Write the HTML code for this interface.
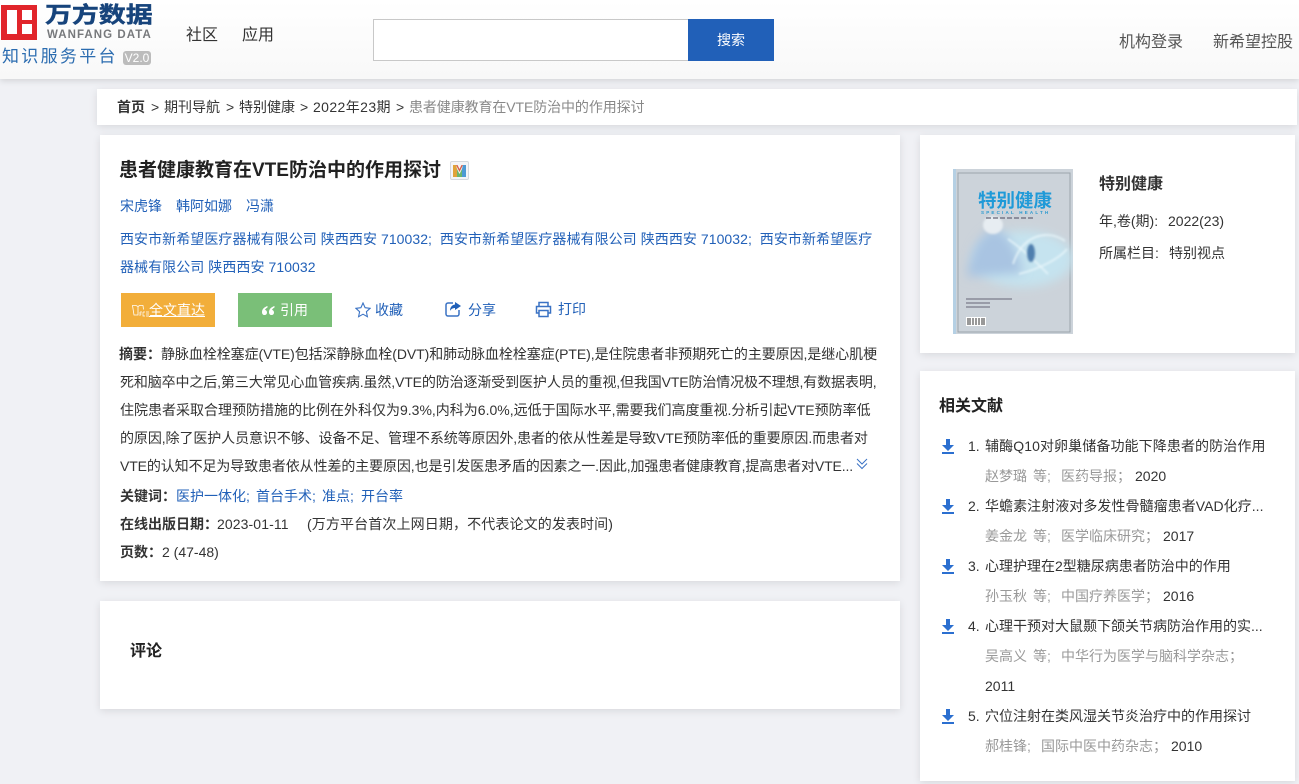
<!DOCTYPE html>
<html lang="zh-CN"><head><meta charset="utf-8"><title>患者健康教育在VTE防治中的作用探讨</title>
<style>
*{box-sizing:border-box;margin:0;padding:0}
html,body{width:1299px;height:784px;overflow:hidden;background:#f0f1f5}
body{position:relative;font-family:"Liberation Sans","Noto Sans CJK SC",sans-serif;font-size:14px;color:#333}
.a{position:absolute;white-space:nowrap;line-height:20px}
.card{position:absolute;background:#fff;box-shadow:0 2px 8px rgba(0,0,0,.1)}
.b{color:#2160b8}
.g{color:#999}
.d{color:#333}
svg{position:absolute;display:block}
</style></head><body>
<div class="a" style="left:0;top:0;width:1299px;height:79px;background:linear-gradient(#fff,#f8f8f8);box-shadow:0 2px 6px rgba(0,0,0,.12)"></div>
<svg style="left:1px;top:5px" width="36" height="35" viewBox="0 0 36 35"><rect width="36" height="35" fill="#e1252b"/><rect x="6" y="5" width="10" height="24" fill="#fff"/><rect x="21" y="5" width="10" height="10" fill="#fff"/><rect x="21" y="19" width="10" height="10" fill="#fff"/></svg>
<div class="a" style="left:45px;top:2px;font-size:27px;line-height:32px;font-weight:700;color:#17447c;letter-spacing:-.1px;-webkit-text-stroke:.5px #17447c;transform:scale(1,.82);transform-origin:0 0">万方数据</div>
<div class="a" style="left:47px;top:29px;font-size:11.500px;line-height:12px;font-weight:700;color:#77797c;letter-spacing:1.050px">WANFANG DATA</div>
<div class="a" style="left:2px;top:46px;font-size:17px;line-height:22px;color:#2b6cb0;letter-spacing:2.300px">知识服务平台</div>
<div class="a" style="left:123px;top:51px;width:28px;height:14px;border-radius:3px;background:#bcbcbc;color:#fff;font-size:12px;line-height:14px;text-align:center">V2.0</div>
<div class="a" style="left:186px;top:26px;font-size:16px">社区</div>
<div class="a" style="left:242px;top:26px;font-size:16px">应用</div>
<div class="a" style="left:373px;top:19px;width:316px;height:42px;background:#fff;border:1px solid #c8c8c8"></div>
<div class="a" style="left:688px;top:19px;width:86px;height:42px;background:#2160b8;color:#fff;text-align:center;line-height:42px;font-size:14px">搜索</div>
<div class="a" style="left:1119px;top:33px;color:#555;font-size:16px">机构登录</div>
<div class="a" style="left:1213px;top:33px;color:#555;font-size:16px">新希望控股</div>

<div class="card" style="left:97px;top:89px;width:1200px;height:36px"></div>
<div class="a" style="left:117px;top:97px"><b>首页</b></div>
<div class="a" style="left:151px;top:97px">&gt;</div>
<div class="a" style="left:164px;top:97px">期刊导航</div>
<div class="a" style="left:226px;top:97px">&gt;</div>
<div class="a" style="left:239px;top:97px">特别健康</div>
<div class="a" style="left:300px;top:97px">&gt;</div>
<div class="a" style="left:313px;top:97px;letter-spacing:.4px">2022年23期</div>
<div class="a" style="left:396px;top:97px">&gt;</div>
<div class="a" style="left:409px;top:97px;color:#888;letter-spacing:-.1px">患者健康教育在VTE防治中的作用探讨</div>

<div class="card" style="left:100px;top:135px;width:800px;height:446px"></div>
<div class="a" style="left:119px;top:158px;font-size:19px;line-height:26px;font-weight:700;color:#222">患者健康教育在VTE防治中的作用探讨</div>
<div class="a" style="left:450px;top:161px;width:19px;height:19px;border:1px solid #d5d8dd;border-radius:2px;background:#f4f5f7"></div>
<svg style="left:453px;top:165px" width="13" height="12" viewBox="0 0 13 12"><path d="M0 12V0h3l1 4v8z" fill="#e0a33a"/><path d="M3 0l3.500 7L10 0h-1.500L6.500 4 4.500 0z" fill="#d65f4a"/><path d="M4 4l2.500 5L9 4v8H4z" fill="#6db56d"/><path d="M9 12V4l1-4h3v12z" fill="#4d9ad4"/></svg>
<div class="a b" style="left:120px;top:196px">宋虎锋</div>
<div class="a b" style="left:176px;top:196px">韩阿如娜</div>
<div class="a b" style="left:246px;top:196px">冯潇</div>
<div class="a b" style="left:120px;top:229px;letter-spacing:.06px">西安市新希望医疗器械有限公司 陕西西安 710032;&nbsp; 西安市新希望医疗器械有限公司 陕西西安 710032;&nbsp; 西安市新希望医疗</div>
<div class="a b" style="left:120px;top:257px;letter-spacing:.06px">器械有限公司 陕西西安 710032</div>

<div class="a" style="left:121px;top:293px;width:94px;height:34px;background:#f2ae3a;color:#fff;line-height:34px;padding-left:28px;text-decoration:underline">全文直达</div>
<svg style="left:132px;top:304px" width="18" height="13" viewBox="0 0 18 13" fill="none" stroke="#fff" stroke-width=".8"><path d="M.5 1.500h3.500L6 2.500V11H2zM6 2.500l1.500-1h3.500l.5 4M2 11h4"/><path d="M8 8v4M8 8h2M8 10h1.500M11 8v4h2M11 8h2M14 8h3M14 10h3M14 12h3" stroke-width=".7"/></svg>
<div class="a" style="left:238px;top:293px;width:94px;height:34px;background:#7abf78;color:#fff;line-height:34px;padding-left:42px">引用</div>
<svg style="left:262px;top:306px" width="13" height="9" viewBox="0 0 13 9" fill="#fff"><path d="M5.500 0C2.500 1 0 3 0 6c0 2 1 3 2.500 3S5 8 5 6.500 4 4 3 4c.3-1 1.300-2 2.500-2.500zM12.500 0C9.500 1 7 3 7 6c0 2 1 3 2.500 3S12 8 12 6.500 11 4 10 4c.3-1 1.300-2 2.500-2.500z"/></svg>
<svg style="left:355px;top:302px" width="16" height="16" viewBox="0 0 16 16" fill="none" stroke="#3a72c4" stroke-width="1.100"><path d="M8 1l2.100 4.700 5 .6-3.700 3.400 1 5L8 12.200l-4.400 2.500 1-5L.9 6.300l5-.6z"/></svg>
<div class="a b" style="left:375px;top:300px">收藏</div>
<svg style="left:445px;top:301px" width="16" height="16" viewBox="0 0 16 16"><path d="M8 2H3a2 2 0 0 0-2 2v9a2 2 0 0 0 2 2h9a2 2 0 0 0 2-2V9" fill="none" stroke="#3a72c4" stroke-width="1.500"/><path d="M10 1l6 4-6 4V7C8 7 6 8 5 10c0-4 2-6 5-6.500z" fill="#2160b8"/></svg>
<div class="a b" style="left:468px;top:300px">分享</div>
<svg style="left:535px;top:301px" width="17" height="17" viewBox="0 0 17 17" fill="none" stroke="#3a72c4" stroke-width="1.500"><path d="M4 5V1.500h9V5M4 12H1.500V5.500h14V12H13M4 9.500h9v6H4z"/></svg>
<div class="a b" style="left:558px;top:299px">打印</div>

<div class="a" style="left:119px;top:344px"><b>摘要：</b></div>
<div class="a" style="left:161px;top:344px;letter-spacing:-.07px">静脉血栓栓塞症(VTE)包括深静脉血栓(DVT)和肺动脉血栓栓塞症(PTE),是住院患者非预期死亡的主要原因,是继心肌梗</div>
<div class="a" style="left:120px;top:372px;letter-spacing:-.12px">死和脑卒中之后,第三大常见心血管疾病.虽然,VTE的防治逐渐受到医护人员的重视,但我国VTE防治情况极不理想,有数据表明,</div>
<div class="a" style="left:120px;top:400px">住院患者采取合理预防措施的比例在外科仅为9.3%,内科为6.0%,远低于国际水平,需要我们高度重视.分析引起VTE预防率低</div>
<div class="a" style="left:120px;top:428px;letter-spacing:-.09px">的原因,除了医护人员意识不够、设备不足、管理不系统等原因外,患者的依从性差是导致VTE预防率低的重要原因.而患者对</div>
<div class="a" style="left:120px;top:456px;letter-spacing:-.11px">VTE的认知不足为导致患者依从性差的主要原因,也是引发医患矛盾的因素之一.因此,加强患者健康教育,提高患者对VTE...</div>
<svg style="left:856px;top:458px" width="12" height="12" viewBox="0 0 12 12" fill="none" stroke="#3a72c4"><path d="M1 1l5 5 5-5M1 5.500l5 5 5-5"/></svg>
<div class="a" style="left:120px;top:486px"><b>关键词：</b></div>
<div class="a b" style="left:176px;top:486px">医护一体化;</div>
<div class="a b" style="left:256px;top:486px">首台手术;</div>
<div class="a b" style="left:322px;top:486px">准点;</div>
<div class="a b" style="left:361px;top:486px">开台率</div>
<div class="a" style="left:120px;top:514px"><b>在线出版日期：</b></div>
<div class="a" style="left:217px;top:514px;letter-spacing:.1px">2023-01-11</div>
<div class="a" style="left:307px;top:514px;letter-spacing:.12px">(万方平台首次上网日期，不代表论文的发表时间)</div>
<div class="a" style="left:120px;top:542px"><b>页数：</b></div>
<div class="a" style="left:162px;top:542px">2 (47-48)</div>

<div class="card" style="left:100px;top:601px;width:800px;height:108px"></div>
<div class="a" style="left:130px;top:642px;font-size:16px;font-weight:700;color:#222">评论</div>

<div class="card" style="left:920px;top:135px;width:375px;height:218px"></div>
<svg style="left:953px;top:169px" width="120" height="165" viewBox="0 0 120 165">
<defs><filter id="f" x="-30%" y="-30%" width="160%" height="160%"><feGaussianBlur stdDeviation="5"/></filter><filter id="f2" x="-30%" y="-30%" width="160%" height="160%"><feGaussianBlur stdDeviation="1"/></filter><clipPath id="c"><rect width="120" height="165"/></clipPath></defs>
<g clip-path="url(#c)">
<rect width="120" height="165" fill="#ccd3da"/><rect width="3" height="165" fill="#b5d0e4"/>
<rect x="5" y="4" width="112" height="159" fill="none" stroke="#9ba5ac"/>
<ellipse cx="70" cy="90" rx="50" ry="28" fill="#c5e3ef" filter="url(#f)"/>
<path d="M14 108C18 78 28 64 42 60c12 2 22 20 28 44z" fill="#a9c4e2" filter="url(#f)"/>
<ellipse cx="40" cy="56" rx="10" ry="9" fill="#e7edf2" filter="url(#f2)"/>
<path d="M60 95C70 65 95 60 112 72M66 105c20-5 40-15 48-25M55 70c15 10 30 25 40 35" stroke="#eaf7fb" stroke-width="1.500" fill="none" filter="url(#f2)"/>
<ellipse cx="78" cy="84" rx="4" ry="9" fill="#4f7fae" filter="url(#f2)"/>
<text x="25" y="38" font-size="18.500" font-weight="700" fill="#1f9ad8" font-family="Liberation Sans,Noto Sans CJK SC,sans-serif">特别健康</text>
<text x="28" y="45" font-size="4.500" font-weight="700" fill="#2a9ad0" letter-spacing="2.200" font-family="Liberation Sans,sans-serif">SPECIAL HEALTH</text>
<path d="M33 49h48" stroke="#667" stroke-width="1.200" stroke-dasharray="5 2"/>
<rect x="13" y="148" width="20" height="9" fill="#fff"/><path d="M15 149v7M17 149v7M20 149v7M23 149v7M26 149v7M29 149v7M31 149v7" stroke="#333"/>
<path d="M13 130h46M13 134h24M13 138h24" stroke="#667" stroke-width="1"/>
</g></svg>
<div class="a" style="left:1099px;top:175px;font-size:16px;font-weight:700;color:#333">特别健康</div>
<div class="a" style="left:1099px;top:211px">年,卷(期):</div>
<div class="a" style="left:1168px;top:211px">2022(23)</div>
<div class="a" style="left:1099px;top:243px">所属栏目:</div>
<div class="a" style="left:1169px;top:243px">特别视点</div>

<div class="card" style="left:920px;top:371px;width:375px;height:410px"></div>
<div class="a" style="left:939px;top:397px;font-size:16px;font-weight:700;color:#222">相关文献</div>

<svg style="left:941px;top:439px" width="15" height="15" viewBox="0 0 15 15" fill="#2b6fd0"><path d="M5 0h4v6h4L7 12 1 6h4zM1 13h12v2H1z"/></svg>
<div class="a" style="left:968px;top:436px">1.</div><div class="a" style="left:985px;top:436px;letter-spacing:.1px">辅酶Q10对卵巢储备功能下降患者的防治作用</div>
<div class="a g" style="left:985px;top:466px">赵梦璐</div><div class="a g" style="left:1033px;top:466px">等;</div><div class="a g" style="left:1061px;top:466px">医药导报；</div><div class="a" style="left:1135px;top:466px">2020</div>

<svg style="left:941px;top:499px" width="15" height="15" viewBox="0 0 15 15" fill="#2b6fd0"><path d="M5 0h4v6h4L7 12 1 6h4zM1 13h12v2H1z"/></svg>
<div class="a" style="left:968px;top:496px">2.</div><div class="a" style="left:985px;top:496px;letter-spacing:.05px">华蟾素注射液对多发性骨髓瘤患者VAD化疗...</div>
<div class="a g" style="left:985px;top:526px">姜金龙</div><div class="a g" style="left:1033px;top:526px">等;</div><div class="a g" style="left:1061px;top:526px">医学临床研究；</div><div class="a" style="left:1163px;top:526px">2017</div>

<svg style="left:941px;top:559px" width="15" height="15" viewBox="0 0 15 15" fill="#2b6fd0"><path d="M5 0h4v6h4L7 12 1 6h4zM1 13h12v2H1z"/></svg>
<div class="a" style="left:968px;top:556px">3.</div><div class="a" style="left:985px;top:556px">心理护理在2型糖尿病患者防治中的作用</div>
<div class="a g" style="left:985px;top:586px">孙玉秋</div><div class="a g" style="left:1033px;top:586px">等;</div><div class="a g" style="left:1061px;top:586px">中国疗养医学；</div><div class="a" style="left:1163px;top:586px">2016</div>

<svg style="left:941px;top:619px" width="15" height="15" viewBox="0 0 15 15" fill="#2b6fd0"><path d="M5 0h4v6h4L7 12 1 6h4zM1 13h12v2H1z"/></svg>
<div class="a" style="left:968px;top:616px">4.</div><div class="a" style="left:985px;top:616px">心理干预对大鼠颞下颌关节病防治作用的实...</div>
<div class="a g" style="left:985px;top:646px">吴高义</div><div class="a g" style="left:1033px;top:646px">等;</div><div class="a g" style="left:1061px;top:646px">中华行为医学与脑科学杂志；</div>
<div class="a" style="left:985px;top:676px">2011</div>

<svg style="left:941px;top:709px" width="15" height="15" viewBox="0 0 15 15" fill="#2b6fd0"><path d="M5 0h4v6h4L7 12 1 6h4zM1 13h12v2H1z"/></svg>
<div class="a" style="left:968px;top:706px">5.</div><div class="a" style="left:985px;top:706px">穴位注射在类风湿关节炎治疗中的作用探讨</div>
<div class="a g" style="left:985px;top:736px">郝桂锋;</div><div class="a g" style="left:1041px;top:736px">国际中医中药杂志；</div><div class="a" style="left:1171px;top:736px">2010</div>
</body></html>
